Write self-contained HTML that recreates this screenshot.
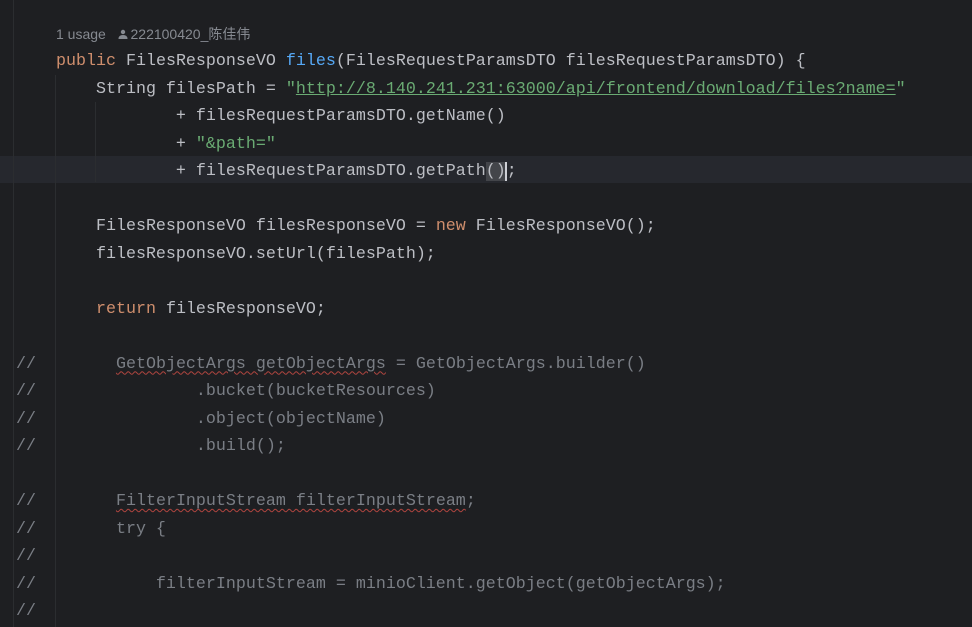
<!DOCTYPE html>
<html><head><meta charset="utf-8"><style>
html,body{margin:0;padding:0;background:#1e1f22;width:972px;height:627px;overflow:hidden}
.c{position:relative;width:972px;height:627px;font-family:"Liberation Mono",monospace;font-size:16.67px;color:#bcbec4}
.l{position:absolute;left:16px;height:27.5px;line-height:27.5px;white-space:pre;margin-top:1px}
.k{color:#cf8e6d}.f{color:#56a8f5}.s{color:#6aab73}.u{text-decoration:underline;text-decoration-color:#6aab73}
.cm{color:#7a7e85}.w{text-decoration:underline wavy #b0453f;text-decoration-thickness:1px;text-underline-offset:3px}
.g{position:absolute;width:1px;background:#2b2d30}
.hl{position:absolute;left:0;top:156px;width:972px;height:27px;background:#26282e}
.hint{position:absolute;left:56px;top:24px;font-family:"Liberation Sans","Noto Sans CJK SC",sans-serif;font-size:14px;color:#868a91;line-height:20px}
.br{background:#43454a}
.cur{border-left:2px solid #ced0d6;margin-left:-1px}
</style></head><body><div class="c">
<div class="hl"></div>
<div class="g" style="left:13px;top:0;height:627px;background:#2b2d30"></div>
<div class="g" style="left:55px;top:75px;height:552px"></div>
<div class="g" style="left:95px;top:102px;height:80px"></div>
<div class="hint">1 usage &nbsp;&nbsp;<svg width="10" height="10" viewBox="0 0 10 10" style="vertical-align:0px;margin-right:3px"><circle cx="5" cy="3" r="2.2" fill="#868a91"/><path d="M0.5 10 Q0.5 6 5 6 Q9.5 6 9.5 10Z" fill="#868a91"/></svg>222100420_陈佳伟</div>
<div class="l" style="top:47px">    <span class="k">public</span> FilesResponseVO <span class="f">files</span>(FilesRequestParamsDTO filesRequestParamsDTO) {</div>
<div class="l" style="top:74.5px">        String filesPath = <span class="s">"<span class="u">http://8.140.241.231:63000/api/frontend/download/files?name=</span>"</span></div>
<div class="l" style="top:102px">                + filesRequestParamsDTO.getName()</div>
<div class="l" style="top:129.5px">                + <span class="s">"&amp;path="</span></div>
<div class="l" style="top:157px">                + filesRequestParamsDTO.getPath<span class="br">()</span><span class="cur"></span>;</div>
<div class="l" style="top:212px">        FilesResponseVO filesResponseVO = <span class="k">new</span> FilesResponseVO();</div>
<div class="l" style="top:239.5px">        filesResponseVO.setUrl(filesPath);</div>
<div class="l" style="top:294.5px">        <span class="k">return</span> filesResponseVO;</div>
<div class="l cm" style="top:349.5px">//        <span class="w">GetObjectArgs getObjectArgs</span> = GetObjectArgs.builder()</div>
<div class="l cm" style="top:377px">//                .bucket(bucketResources)</div>
<div class="l cm" style="top:404.5px">//                .object(objectName)</div>
<div class="l cm" style="top:432px">//                .build();</div>
<div class="l cm" style="top:487px">//        <span class="w">FilterInputStream filterInputStream</span>;</div>
<div class="l cm" style="top:514.5px">//        try {</div>
<div class="l cm" style="top:542px">//</div>
<div class="l cm" style="top:569.5px">//            filterInputStream = minioClient.getObject(getObjectArgs);</div>
<div class="l cm" style="top:597px">//</div>
</div></body></html>
